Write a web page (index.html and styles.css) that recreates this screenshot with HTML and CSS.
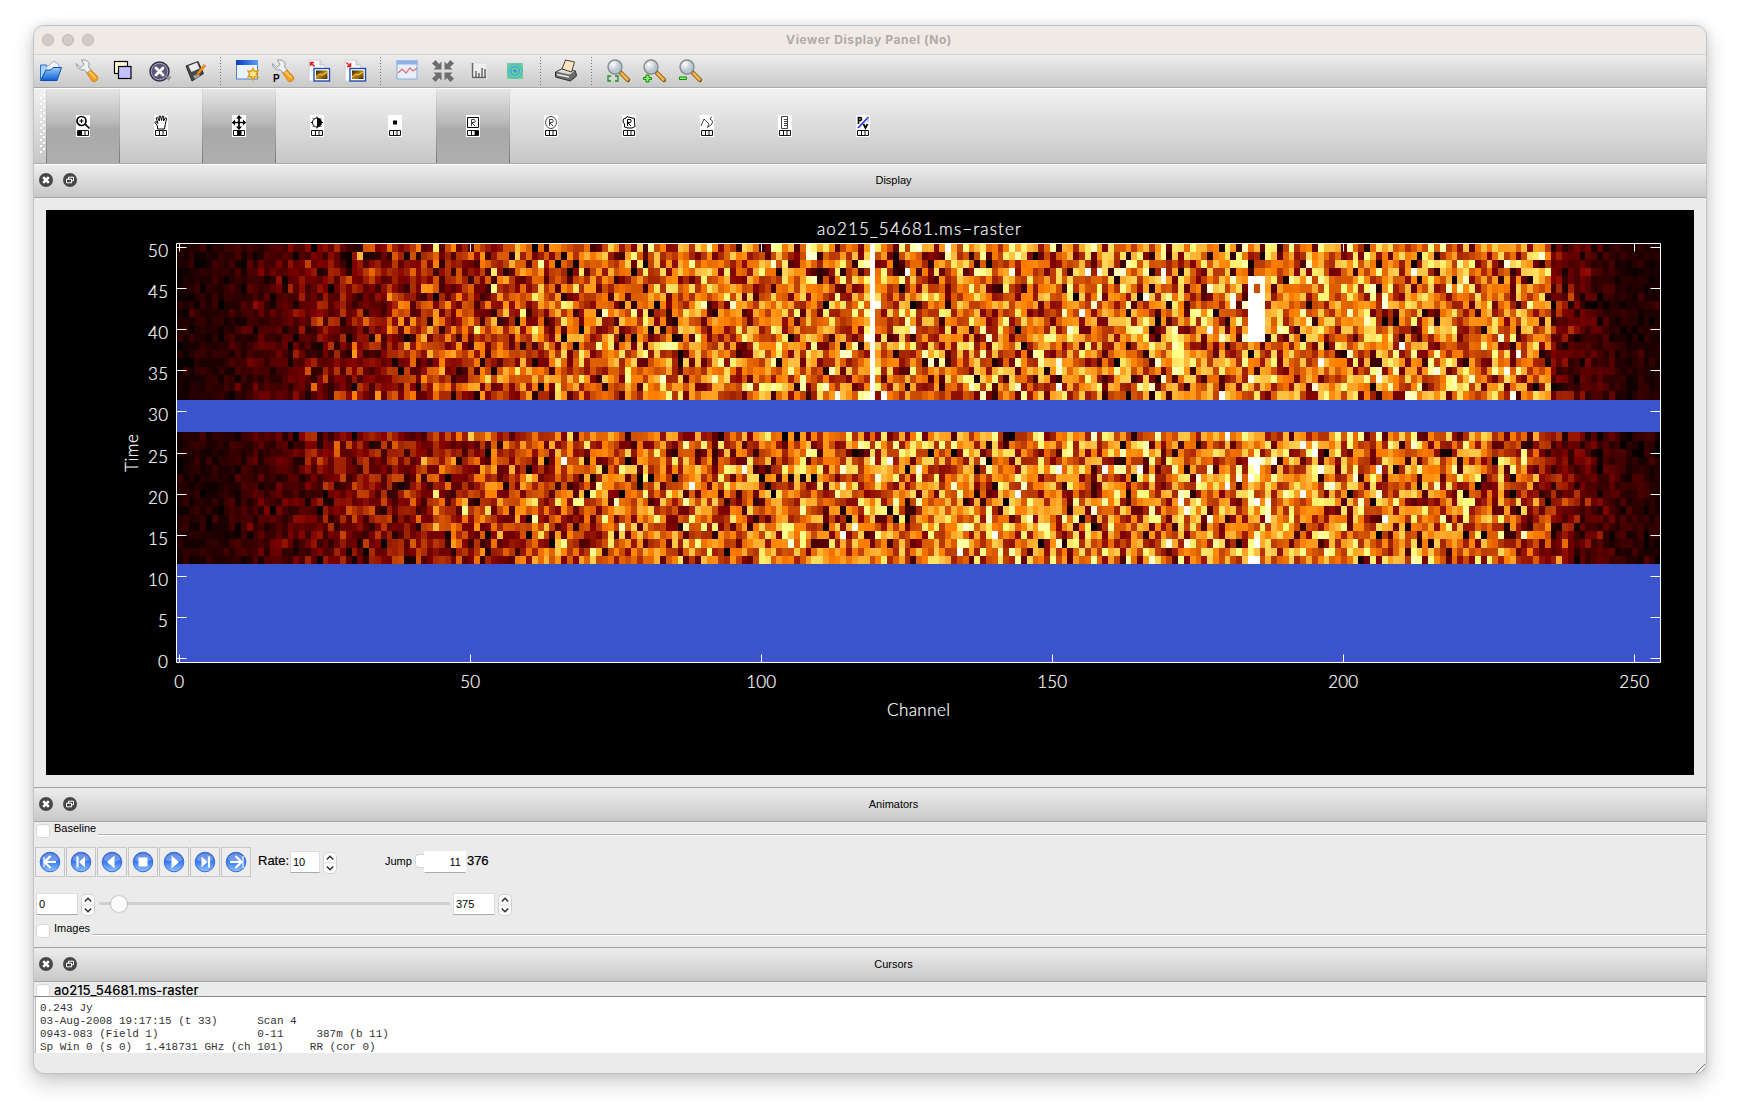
FILE: index.html
```html
<!DOCTYPE html>
<html lang="en">
<head>
<meta charset="utf-8">
<title>Viewer Display Panel (No)</title>
<link rel="stylesheet" href="styles.css">
</head>
<body>
<svg class="defs" width="0" height="0">
  <defs>
    <linearGradient id="blue" x1="0" y1="0" x2="0" y2="1"><stop offset="0" stop-color="#2a5fd0"/><stop offset=".5" stop-color="#3c7cf0"/><stop offset="1" stop-color="#8fc4ff"/></linearGradient>
    <linearGradient id="folder" x1="0" y1="0" x2="0" y2="1"><stop offset="0" stop-color="#9cccfa"/><stop offset="1" stop-color="#0b5fd0"/></linearGradient>
    <linearGradient id="sky" x1="0" y1="0" x2="1" y2="0"><stop offset="0" stop-color="#0a3cc0"/><stop offset="1" stop-color="#5aa0f0"/></linearGradient>
    <radialGradient id="lens" cx=".35" cy=".3"><stop offset="0" stop-color="#fff"/><stop offset="1" stop-color="#b9c6cf"/></radialGradient>
    <linearGradient id="gold" x1="0" y1="0" x2="1" y2="1"><stop offset="0" stop-color="#2a1c00"/><stop offset=".5" stop-color="#b98212"/><stop offset="1" stop-color="#3a2800"/></linearGradient>
    <symbol id="wrench" viewBox="0 0 24 24">
      <path d="M11 13l3.500-3.500 7.500 7.500q1.800 2.500-.3 4.500t-4.500.5z" fill="#f8a01c" stroke="#c47408" stroke-width=".8"/><path d="M14 12.500l6.500 6.500" stroke="#ffd27a" stroke-width="1.500"/>
      <path d="M1 4.500l4.500 4 3.500-3-2.500-4.500q5-1 7.500 3 .5 2-.5 4l2.500 2.500-3.500 3.500-3-3q-7 .500-8.500-6.500z" fill="#eef0f3" stroke="#8b9098" stroke-width=".9"/>
    </symbol>
    <symbol id="magnify" viewBox="0 0 24 24">
      <path d="M15 14l7 7" stroke="#8a5a10" stroke-width="4.500" stroke-linecap="round"/><path d="M15.500 14.500l6 6" stroke="#f6b64a" stroke-width="2.600" stroke-linecap="round"/>
      <circle cx="9" cy="8" r="7" fill="url(#lens)" stroke="#858b8e" stroke-width="1.400"/>
    </symbol>
    <symbol id="picture" viewBox="0 0 24 24">
      <path d="M2 1h11l5 5v16H2z" fill="#f7f9fb" stroke="#c4c9d0" stroke-width=".8"/><path d="M13 1v5h5" fill="#dde3ea" stroke="#b5bbc4" stroke-width=".8"/>
      <rect x="7" y="9.500" width="15.500" height="12.500" fill="#fff" stroke="#2350b0" stroke-width="1.400"/><rect x="9" y="11.500" width="11.500" height="8.500" fill="url(#gold)"/><path d="M9 18l4-3 2 1 5-3" stroke="#ffd24a" fill="none"/>
    </symbol>
    <symbol id="close" viewBox="0 0 14 14"><circle cx="7" cy="7" r="7" fill="#474747"/><path d="M4.200 4.200l5.600 5.600M9.800 4.200l-5.600 5.600" stroke="#fff" stroke-width="2.600"/></symbol>
    <symbol id="float" viewBox="0 0 14 14"><circle cx="7" cy="7" r="7" fill="#474747"/><path d="M5.500 6V4.200h5v3.600H9M3.500 6.200h5v3.600h-5z" stroke="#fff" fill="none"/></symbol>
    <symbol id="mouse" viewBox="0 0 14 7"><path d="M1.500 .5h11v5h-11zM5.500 .5v5M9 .5v5" fill="none" stroke="#111"/></symbol>
    <symbol id="ring" viewBox="0 0 22 22"><circle cx="11" cy="11" r="9.800" fill="url(#blue)" stroke="#3c6fd2"/><path d="M2.500 9a8.700 8.700 0 0 1 17 0q-8 3-17 0z" fill="#fff" opacity=".28"/></symbol>
    <symbol id="spin" viewBox="0 0 14 22"><rect x=".5" y=".5" width="13" height="21" rx="4.500" fill="#fff" stroke="#d2d2d2"/><path d="M1 11h12" stroke="#ddd"/><path d="M3.800 7.500l3.200-3.200 3.200 3.200M3.800 14.500l3.200 3.200 3.200-3.200" fill="none" stroke="#333" stroke-width="1.600"/></symbol>
  </defs>
</svg>

<main class="window">
  <header class="titlebar">
    <div class="lights"><i></i><i></i><i></i></div>
    <span class="window-title">Viewer Display Panel (No)</span>
  </header>

  <nav class="toolbar">
    <svg viewBox="0 0 24 24"><path d="M1.500 20V6h6l1 2h3l1 12z" fill="#a9d2fa" stroke="#2a6fd0"/><path d="M7 9l8-7 5 4v9H6z" fill="#f6f9ff" stroke="#9aaad0"/><path d="M1.500 21.500L7 11h5l2-2.500h8.500L18 21.500z" fill="url(#folder)" stroke="#0b4fb8"/></svg>
    <svg><use href="#wrench"/></svg>
    <svg viewBox="0 0 24 24"><rect x="3.500" y="2.500" width="13" height="12" fill="#fffcd0" stroke="#000" stroke-width="1.200"/><rect x="7.500" y="7.500" width="12.500" height="12" fill="#c3c1ff" stroke="#000" stroke-width="1.200"/></svg>
    <svg viewBox="0 0 24 24"><circle cx="12.500" cy="12.500" r="9.500" fill="#5b5878" stroke="#35334a" stroke-width="1.500"/><circle cx="12.500" cy="12.500" r="8.200" fill="none" stroke="#a6a4bd"/><path d="M9 9l7 7M16 9l-7 7" stroke="#fff" stroke-width="2.800" stroke-linecap="round"/><path d="M18.500 17.500h6l-3 4.500z" fill="#8f8f8f"/></svg>
    <svg viewBox="0 0 24 24"><path d="M3 7L15 2.500l5.500 12L9 22z" fill="#48484a" stroke="#2b2b2b"/><path d="M5.500 7l8.500-3.500 2.500 6-8 3.500z" fill="#e9edef"/><path d="M10 17l5.500-2.500 1.500 2.500-5 3z" fill="#9fa3a6"/><path d="M21 5.500l-6.500 8-1 3 2.500-1.500L22.500 7z" fill="#f59a26" stroke="#d26b0c" stroke-width=".8"/></svg>
    <i class="divider"></i>
    <svg viewBox="0 0 24 24"><rect x="1.500" y="1.500" width="21" height="18.500" fill="#eaf3fd" stroke="#4a7fd0"/><path d="M1 1h22v5H1z" fill="url(#sky)"/><path d="M18 9.500l1.600 3 3.400-.6-1.600 3.100L23 18l-3.400-.4-1.600 3.300-1.600-3.300L13 18l1.600-3L13 11.900l3.400.6z" fill="#ffe98a" stroke="#e09a10" stroke-width="1.400"/></svg>
    <svg viewBox="0 0 24 24"><use href="#wrench"/><text x="2" y="22.500" class="letter-p">P</text></svg>
    <svg viewBox="0 0 24 24"><use href="#picture"/><path d="M3.500 3v4M3 3.500h4M3.500 3.500l4 4" stroke="#e02020" stroke-width="1.500"/></svg>
    <svg viewBox="0 0 24 24"><use href="#picture"/><path d="M7.500 4v4M4 7.500h4M3.500 3.500l4 4" stroke="#e02020" stroke-width="1.500"/></svg>
    <i class="divider"></i>
    <svg viewBox="0 0 24 24"><rect x="2" y="2" width="20" height="18" fill="#e6f0fb" stroke="#8cabe0"/><path d="M1.500 1.500h21v4h-21z" fill="#8fb0e8"/><path d="M3 14l4-4 4 4 4-5 3 3 4-3" fill="none" stroke="#e56a6a" stroke-width="1.200"/></svg>
    <svg viewBox="0 0 24 24" fill="#6d6d6d"><path id="arr" d="M10.500 10.500H2.500l2.500-2.500L1 4.600 4.600 1l3.400 4L10.500 2.500z"/><use href="#arr" transform="rotate(90 12 12)"/><use href="#arr" transform="rotate(180 12 12)"/><use href="#arr" transform="rotate(270 12 12)"/></svg>
    <svg viewBox="0 0 24 24"><path d="M4 4h16v16H4z" fill="#efefef" stroke="#ddd"/><path d="M5.500 4v14.500H19M9 18v-6M12 18v-4M15 18V9M18 18v-8" fill="none" stroke="#666" stroke-width="1.500"/></svg>
    <svg viewBox="0 0 24 24"><path d="M4 4h16v16H4z" fill="#70cf98"/><g fill="none" stroke-width="1.600"><circle cx="12" cy="12" r="7" stroke="#4ebcc6"/><circle cx="12" cy="12" r="4.200" stroke="#41a6dc"/></g><circle cx="12" cy="12" r="1.700" fill="#3a8ee0"/></svg>
    <i class="divider"></i>
    <svg viewBox="0 0 24 24"><path d="M1.500 13l6-3 14 2 1 5-6 5-15-4z" fill="#6c6c68" stroke="#30302e"/><path d="M2 13l6-3 13 2-5 4z" fill="#dedfd8" stroke="#555" stroke-width=".7"/><path d="M3 15.500l12 2.500" stroke="#e8e8e4" stroke-width="1.500"/><path d="M8 10l3.500-9 9 2-3 10z" fill="#fde4c0" stroke="#4a4030"/></svg>
    <i class="divider"></i>
    <svg viewBox="0 0 24 24"><use href="#magnify"/><path d="M2 20v-3h3M9 17h3v3M2 19v3h3M9 22h3v-3" fill="none" stroke="#149414" stroke-width="1.300"/></svg>
    <svg viewBox="0 0 24 24"><use href="#magnify"/><path d="M4 16h3v2.500h2.500v2H7V23H4v-2.500H1.500v-2H4z" fill="#8ef060" stroke="#108c10"/></svg>
    <svg viewBox="0 0 24 24"><use href="#magnify"/><path d="M1.500 18h7v2.500h-7z" fill="#8ef060" stroke="#108c10"/></svg>
  </nav>

  <nav class="tools">
    <i class="grip"></i>
    <div class="tool on"><svg viewBox="0 0 14 22"><circle cx="5.500" cy="6" r="4.500" class="ln2"/><path d="M3.500 6h4M5.500 4v4" class="ln"/><path d="M9 9l4.500 4.500" class="ln2"/><use href="#mouse" y="15" width="14" height="7"/><path d="M2 16h3.500v4H2z"/></svg></div>
    <div class="tool"><svg viewBox="0 0 14 22"><path d="M3.500 14v-3L.8 7.200l1-.8L4 8.500 2.200 3l1.300-.6L5.500 6 5 1.200 6.500 1l1 4.500L8.500 1l1.300.3L9.500 6l2.200-3.500 1 .8L11.500 8l-1 6z" class="ln"/><use href="#mouse" y="15" width="14" height="7"/></svg></div>
    <div class="tool on"><svg viewBox="0 0 14 22"><path d="M7 1v13M.5 7.500h13" class="ln2"/><path d="M7 0l3 3.500H4zM7 15l3-3.500H4zM0 7.500l3-3v6zM14 7.500l-3-3v6z"/><use href="#mouse" y="15" width="14" height="7"/><path d="M5.500 16H9v4H5.500z"/></svg></div>
    <div class="tool"><svg viewBox="0 0 14 22"><circle cx="7" cy="7.500" r="4.500" class="ln"/><path d="M7 3a4.500 4.500 0 0 1 0 9z"/><path d="M7 1.500v1.500M7 12v1.500M1 7.500h1.500M11.500 7.500h1.500M2.800 3.300l1 1M11.200 3.300l-1 1M2.800 11.700l1-1M11.200 11.700l-1-1" class="ln"/><use href="#mouse" y="15" width="14" height="7"/></svg></div>
    <div class="tool"><svg viewBox="0 0 14 22"><path d="M5 5.500h4v4H5z"/><use href="#mouse" y="15" width="14" height="7"/></svg></div>
    <div class="tool on"><svg viewBox="0 0 14 22"><path d="M1.500 2.500h11v10h-11z" class="ln"/><path d="M5.500 11V4.500h3q1.500 1.500 0 3H5.500L9 11" class="ln gray"/><use href="#mouse" y="15" width="14" height="7"/><path d="M9 16h3.500v4H9z"/></svg></div>
    <div class="tool"><svg viewBox="0 0 14 22"><ellipse cx="7" cy="7.500" rx="5.500" ry="6" class="ln gray"/><path d="M5.500 11V4.500h3q1.500 1.500 0 3H5.500L9 11" class="ln gray"/><use href="#mouse" y="15" width="14" height="7"/></svg></div>
    <div class="tool"><svg viewBox="0 0 14 22"><path d="M1.500 4l2.500-1 1-1.500L8 2.500l4.500 1v4l.5 4L10 13H6l-3.500-1V9L1 7z" class="ln"/><path d="M5.500 11V4.500h3q1.500 1.500 0 3H5.500L9 11" class="ln"/><use href="#mouse" y="15" width="14" height="7"/></svg></div>
    <div class="tool"><svg viewBox="0 0 14 22"><path d="M1 11l3-7 5 5-1.500 3.500L12 9l.5-3L10 4l2-2.500" class="ln gray"/><use href="#mouse" y="15" width="14" height="7"/></svg></div>
    <div class="tool"><svg viewBox="0 0 14 22"><path d="M3.500 1.500h6v12h-6zM6 4.500h3M6 6.500h3M6 8.500h3M6 10.500h3" class="ln gray"/><use href="#mouse" y="15" width="14" height="7"/></svg></div>
    <div class="tool"><svg viewBox="0 0 14 22"><path d="M2.500 9V2.500h2q2 1.500 0 3h-2" class="ln2"/><path d="M7.500 9l2 4 2-4" class="ln2"/><path d="M2 13L12.500 2" stroke="#2436d8" stroke-width="1.800"/><path d="M12 3v5" stroke="#9aa4f0"/><use href="#mouse" y="15" width="14" height="7"/></svg></div>
  </nav>

  <div class="dock-title first"><svg><use href="#close"/></svg><svg><use href="#float"/></svg><span>Display</span></div>
  <section class="display">
    <div class="plot">
      <svg id="axes" width="1648" height="565" viewBox="46 210 1648 565"></svg>
      <canvas id="raster" width="1483" height="419"></canvas>
      <svg id="ticks" class="ticks" width="1648" height="565" viewBox="46 210 1648 565"></svg>
    </div>
  </section>

  <div class="dock-title"><svg><use href="#close"/></svg><svg><use href="#float"/></svg><span>Animators</span></div>
  <section class="animators">
    <div class="group"><i class="check"></i><span>Baseline</span><i class="rule"></i></div>
    <div class="player">
      <div class="buttons">
        <b><svg viewBox="0 0 22 22"><use href="#ring"/><path d="M11.500 5l-6 6 6 6M6 11h11" class="w"/><path d="M5 6v10" stroke="#fff" stroke-width="1.200"/></svg></b>
        <b><svg viewBox="0 0 22 22"><use href="#ring"/><path d="M7.500 5.500v11" class="w"/><path d="M15 5.500v11L9 11z" fill="#fff"/></svg></b>
        <b><svg viewBox="0 0 22 22"><use href="#ring"/><path d="M13.500 4.500v13L6 11z" fill="#fff"/></svg></b>
        <b><svg viewBox="0 0 22 22"><use href="#ring"/><path d="M6.500 6.500h9v9h-9z" fill="#fff"/></svg></b>
        <b><svg viewBox="0 0 22 22"><use href="#ring"/><path d="M8.500 4.500v13L16 11z" fill="#fff"/></svg></b>
        <b><svg viewBox="0 0 22 22"><use href="#ring"/><path d="M15 5.500v11" class="w"/><path d="M7.500 5.500v11l6-5.500z" fill="#fff"/></svg></b>
        <b><svg viewBox="0 0 22 22"><use href="#ring"/><path d="M10.500 5l6 6-6 6M16 11H5" class="w"/><path d="M18 5v12" stroke="#fff" stroke-width="1.200"/></svg></b>
      </div>
      <span class="big rate">Rate:</span><span class="field f-rate">10</span><svg class="spin"><use href="#spin"/></svg>
      <span class="jump">Jump</span><i class="check clipped"></i><span class="field f-jump">11</span><span class="big total">376</span>
    </div>
    <div class="range">
      <span class="field f-range">0</span><svg class="spin"><use href="#spin"/></svg>
      <div class="track"><i></i></div>
      <span class="field f-range">375</span><svg class="spin"><use href="#spin"/></svg>
    </div>
    <div class="group"><i class="check"></i><span>Images</span><i class="rule"></i></div>
  </section>

  <div class="dock-title"><svg><use href="#close"/></svg><svg><use href="#float"/></svg><span>Cursors</span></div>
  <div class="cursor-name"><i class="check"></i><span>ao215_54681.ms-raster</span></div>
  <pre class="readout">0.243 Jy
03-Aug-2008 19:17:15 (t 33)      Scan 4
0943-083 (Field 1)               0-11     387m (b 11)
Sp Win 0 (s 0)  1.418731 GHz (ch 101)    RR (cor 0)</pre>
  <footer class="status"><svg width="12" height="12"><path d="M1 11L11 1M5 11l6-6M9 11l2-2" stroke="#777"/></svg></footer>
</main>
<script src="plot.js"></script>
</body>
</html>
```
FILE: styles.css
```css
* { box-sizing: border-box; }
body { margin: 0; padding: 25px 33px; height: 1115px; background: #fff; overflow: hidden; font: 11px/14px "Liberation Sans", Arial, sans-serif; color: #000; }
svg { display: block; flex: none; }
.defs { position: absolute; }
.window { width: 1674px; height: 1049px; border: 1px solid #c3c3c3; border-radius: 11px; background: #ebebeb; overflow: hidden; display: flex; flex-direction: column; box-shadow: 0 9px 22px rgba(0,0,0,.2), 0 0 10px rgba(0,0,0,.1); }
.window > * { flex: none; }

.titlebar { height: 29px; background: #f0eae6; border-bottom: 1px solid #d7d3d0; display: grid; grid-template-columns: 120px 1fr 120px; align-items: center; }
.lights { display: flex; gap: 8px; padding-left: 8px; }
.lights i { width: 12px; height: 12px; border-radius: 50%; background: #d2ccc9; border: 1px solid #bbb5b2; }
.window-title { text-align: center; padding-right: 2px; font: bold 12px/14px Inter, sans-serif; letter-spacing: .58px; color: #b0aaa7; }

.toolbar { height: 33px; padding-left: 5px; display: flex; align-items: center; gap: 12px; background: linear-gradient(#ededed, #c9c9c9); border-bottom: 1px solid #a9a9a9; }
.toolbar > svg { width: 24px; height: 24px; }
.divider { width: 3.75px; height: 28px; background: repeating-linear-gradient(#777 0 1px, transparent 1px 3px) 1px 0 / 1px 100% no-repeat; }
.letter-p { font: bold 10px "Liberation Sans", sans-serif; }

.tools { height: 76px; display: flex; gap: 4px; background: linear-gradient(#f1f1f1, #c7c7c7); border-top: 1px solid #fff; border-bottom: 1px solid #a9a9a9; }
.grip { width: 6px; margin: 5px -4px 10px 6px; align-self: stretch; background: radial-gradient(circle at 1px 1px, #fff .7px, transparent 1.3px) 3px 0 / 6px 6px, radial-gradient(circle at 1px 1px, #fff .7px, transparent 1.3px) 0 3px / 6px 6px; }
.tool { width: 74px; padding-top: 1px; display: flex; align-items: center; justify-content: center; }
.tool svg { width: 14px; height: 22px; background: #fff; margin-bottom: 1px; }
.tool.on { background: linear-gradient(#e6e6e6, #b9b9b9 45%, #a9a9a9 55%, #aeaeae); border: solid; border-width: 0 1px; border-image: linear-gradient(#ddd, #777) 1; }
.ln { fill: none; stroke: #000; stroke-width: 1; }
.ln2 { fill: none; stroke: #000; stroke-width: 1.7; }
.gray { stroke: #444; }

.dock-title { height: 35px; padding: 0 6px 2px 5px; display: flex; align-items: center; gap: 10px; background: linear-gradient(#ededed, #c8c8c8); border-top: 1px solid #a2a2a2; border-bottom: 1px solid #a9a9a9; }
.dock-title.first { height: 34px; border-top-color: #fff; }
.dock-title svg { width: 14px; height: 14px; }
.dock-title span { flex: 1; text-align: center; }

.display { height: 589px; padding: 12px 11px 12px 12px; }
.plot { position: relative; width: 1648px; height: 565px; background: #000; }
.plot canvas { position: absolute; left: 131px; top: 34px; }
.ticks { position: absolute; left: 0; top: 0; }
.plot text { font: 300 17px Lato, sans-serif; fill: #fff; stroke: #fff; stroke-width: .2px; }

.animators { height: 125px; }
.group { height: 24px; padding-left: 2px; display: flex; align-items: flex-start; }
.group span { margin: -1px 0 0 4px; }
.check { width: 14px; height: 14px; margin-top: 2px; background: #fff; border: 1px solid #d6d6d6; border-radius: 3.5px; flex: none; }
.rule { flex: 1; height: 2px; margin: 12px 0 0 2px; background: #fff; border-top: 1px solid #b3b3b3; }
.player { height: 32px; padding: 1px 0 0 1px; display: flex; align-items: flex-start; }
.buttons { display: flex; gap: 1px; }
.buttons b { width: 30px; height: 30px; border: 1px solid #c6c6c6; padding: 3px; background: #eee; }
.buttons svg { width: 22px; height: 22px; }
.w { fill: none; stroke: #fff; stroke-width: 2.2; }
.big { font-size: 13px; line-height: 16px; margin-top: 6px; }
.rate { width: 32px; margin-left: 7px; -webkit-text-stroke: .15px #000; }
.field { height: 22px; background: #fff; border: 1px solid #ddd; border-bottom-color: #aaa; line-height: 20px; padding: 0 2px; }
.f-rate { width: 30px; margin-top: 4px; }
.spin { width: 14px; height: 22px; margin: 5px 0 0 3px; }
.jump { margin: 7px 3px 0 48px; }
.clipped { width: 9px; border-right: 0; border-radius: 4px 0 0 4px; margin-top: 7px; }
.f-jump { width: 42px; text-align: right; padding-right: 4px; margin-top: 4px; border-color: #fff #fff #aaa; }
.total { margin-left: 1px; -webkit-text-stroke: .25px #000; }
.range { height: 44px; padding: 15px 0 0 2px; display: flex; }
.f-range { width: 42px; }
.range .spin { margin: 1px 0 0 3px; }
.track { width: 351px; height: 3px; margin: 9px 3px 0 4px; border-radius: 2px; background: #cfcfcf; }
.track i { display: block; width: 16px; height: 16px; margin: -6px 0 0 12px; border-radius: 50%; background: #fdfdfd; box-shadow: 0 0 2px rgba(0,0,0,.4); }

.cursor-name { height: 15px; padding-left: 2px; display: flex; overflow: hidden; border-bottom: 1px solid #8a8a8a; }
.cursor-name span { margin-left: 4px; font: 500 13px/17px Inter, sans-serif; letter-spacing: -.04px; }
.readout { height: 56px; margin: 0 2px 0 1px; padding: 5px 4px 0; background: #fff; border-left: 1px solid #bbb; font: 11px/13px "Liberation Mono", "Courier New", monospace; letter-spacing: -.02px; color: #333; }
.status { height: 22px; display: flex; justify-content: flex-end; align-items: flex-end; }
```
FILE: plot.js
```js
// Geometry of the raster plot, in window coordinates.
const X0 = 179.5, DX = 5.82, Y0 = 658.5, DY = 8.22;
const LEFT = 176.5, RIGHT = 1660.5, TOP = 243.5, BOTTOM = 662.5;

let seed = 54681;
function rnd() {
  seed = (seed + 0x6D2B79F5) | 0;
  let t = Math.imul(seed ^ (seed >>> 15), 1 | seed);
  t = (t + Math.imul(t ^ (t >>> 7), 61 | t)) ^ t;
  return ((t ^ (t >>> 14)) >>> 0) / 4294967296;
}
const gauss = () => Math.sqrt(-2 * Math.log(1 - rnd())) * Math.cos(2 * Math.PI * rnd());

// Band-pass: mean level by channel.
const upper = [[0,.06],[8,.08],[14,.13],[25,.22],[40,.29],[55,.37],[75,.43],[110,.46],[180,.49],[235.5,.45],[236,.2],[243,.14],[247,.07],[255,.06]];
const lower = [[0,.06],[8,.08],[14,.13],[25,.21],[40,.28],[55,.36],[75,.42],[110,.46],[180,.49],[220,.46],[231,.4],[235,.3],[239,.21],[246,.12],[255,.07]];
function level(ch, p) {
  let i = 1;
  while (i < p.length - 1 && ch > p[i][0]) i++;
  const [a, b] = [p[i - 1], p[i]];
  return a[1] + (b[1] - a[1]) * (ch - a[0]) / (b[0] - a[0]);
}
const byte = v => Math.round(255 * Math.min(1, Math.max(0, v)));
const hot = v => `rgb(${byte(2 * v)},${byte(2 * v - .5)},${byte(2 * v - 1)})`;

const ctx = document.getElementById('raster').getContext('2d');
const px = c => Math.round(c * DX);
const py = r => Math.round(Y0 - (r - .5) * DY - 244);
ctx.fillStyle = '#3b54cb';
ctx.fillRect(0, 0, 1483, 419);
for (let r = 12; r <= 50; r++) {
  if (r > 27 && r < 32) continue;
  for (let c = 0; c < 255; c++) {
    const m = level(c, r > 31 ? upper : lower);
    let v = Math.abs(m * (1 + .42 * gauss()));
    if (c === 119 && r > 31) v = .97 + rnd() * .1;
    if (c === 118 && r > 31) v += .12;
    if (c >= 184 && c <= 186 && r >= 39 && r <= 46) v = (c === 185 && r === 45) ? .4 : .96 + rnd() * .1;
    else if (c >= 184 && c <= 187 && r < 25) v += .13;
    ctx.fillStyle = hot(v);
    ctx.fillRect(px(c), py(r + 1), px(c + 1) - px(c), py(r) - py(r + 1));
  }
}

// Frame and tick marks lie over the raster, labels outside it.
let d = `M${LEFT} ${TOP}H${RIGHT}V${BOTTOM}H${LEFT}Z`, labels = '';
const label = (s, x, y, w, extra = '') =>
  `<text x="${x}" y="${y}" textLength="${w}" text-anchor="middle" ${extra}>${s}</text>`;
for (let c = 0; c <= 250; c += 50) {
  const x = Math.round(X0 + c * DX - .5) + .5;
  d += `M${x} ${TOP}v8M${x} ${BOTTOM}v-8`;
  const w = String(c).length * 10;
  labels += label(c, x - .3, 688.3, w);
}
for (let r = 0; r <= 50; r += 5) {
  const y = Math.round(Y0 - r * DY - .5) + .5;
  d += `M${LEFT} ${y}h10M${RIGHT} ${y}h-10`;
  const w = String(r).length * 10;
  labels += label(r, 168 - w / 2, y + 9.2, w);
}
labels += label('ao215_54681.ms−raster', 919, 235.3, 204);
labels += label('Channel', 918.5, 716.3, 63);
labels += label('Time', 0, 0, 38, 'transform="translate(138 453) rotate(-90)"');
document.getElementById('axes').innerHTML = labels;
document.getElementById('ticks').innerHTML = `<path d="${d}" fill="none" stroke="#fff"/>`;
```
